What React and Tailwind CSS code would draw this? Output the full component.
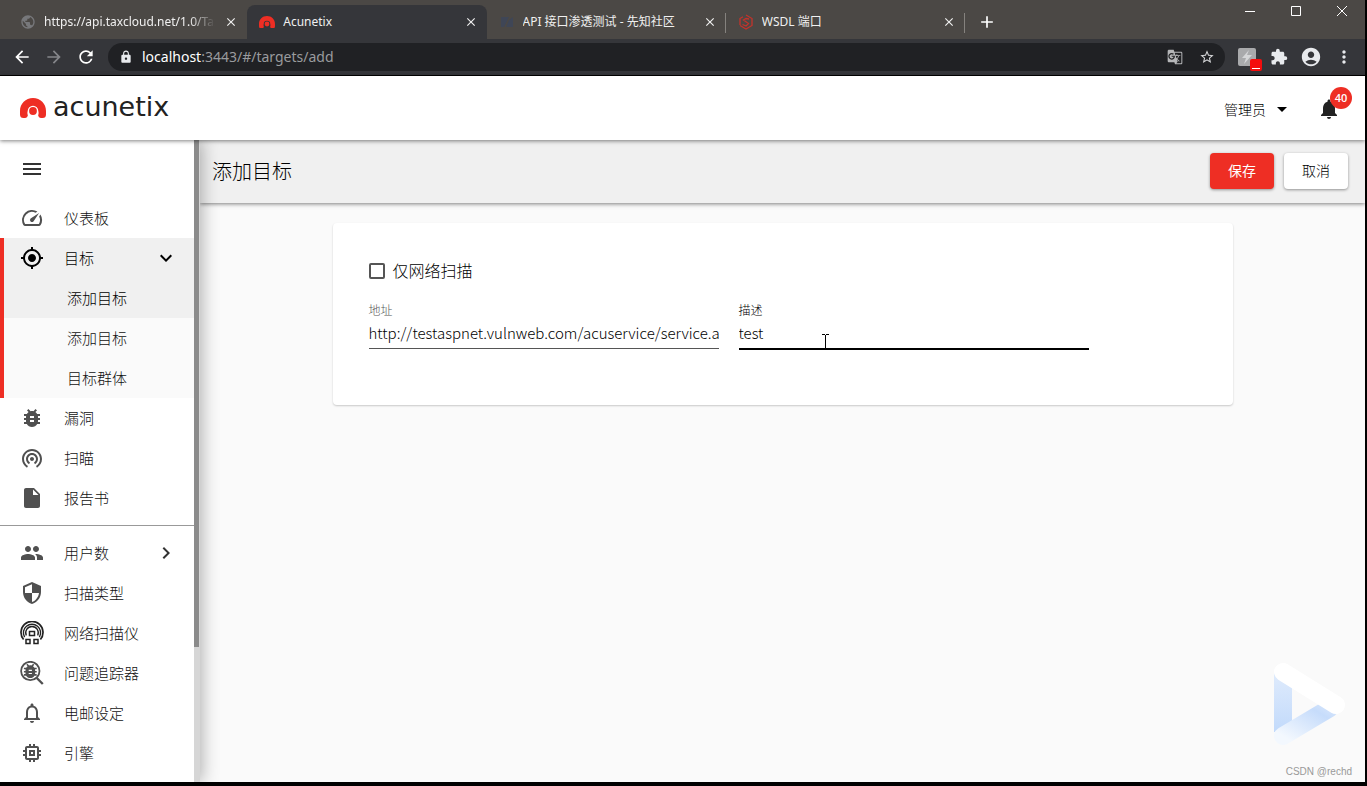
import {
  MdMenu, MdOutlineSpeed, MdGpsFixed, MdExpandMore, MdChevronRight, MdBugReport,
  MdWifiTethering, MdInsertDriveFile, MdPeople, MdSecurity, MdNotificationsNone,
  MdMemory, MdNotifications, MdArrowDropDown, MdArrowBack, MdArrowForward, MdRefresh,
  MdLock, MdStarBorder, MdExtension, MdAccountCircle, MdMoreVert, MdClose, MdAdd, MdPublic,
  MdGTranslate,
} from "react-icons/md";

function AcunetixMark({ className }) {
  return (
    <svg viewBox="0 0 26 20" className={className} aria-hidden="true">
      <path
        fill="#ee2e24"
        d="M13 0C5.600 0 0 5.600 0 13v3.500A3.500 3.500 0 0 0 3.500 20h1A3.200 3.200 0 0 0 7.900 17.300 6.200 6.200 0 0 1 7.700 13a5.300 5.300 0 0 1 10.600 0 6.200 6.200 0 0 1-.2 4.300A3.200 3.200 0 0 0 21.500 20h1a3.500 3.500 0 0 0 3.500-3.500V13C26 5.600 20.400 0 13 0z"
      />
      <circle cx="13" cy="13" r="3.900" fill="#ee2e24" />
    </svg>
  );
}

function NetworkScannerIcon({ className }) {
  return (
    <svg viewBox="0 0 24 24" className={className} fill="none" stroke="#222" aria-hidden="true">
      <path strokeWidth="1.700" d="M3.600 18.500A11 11 0 1 1 20.400 18.500" />
      <path strokeWidth="1.400" d="M4.600 16.200A8.600 8.600 0 1 1 19.400 16.200" />
      <path strokeWidth="1.300" d="M6.300 14.500A6.300 6.300 0 1 1 17.700 14.500" />
      <rect x="9.500" y="10.500" width="5" height="4" strokeWidth="1.500" />
      <rect x="6" y="18.500" width="4" height="4" strokeWidth="1.500" />
      <rect x="14" y="18.500" width="4" height="4" strokeWidth="1.500" />
    </svg>
  );
}

function IssueTrackerIcon({ className }) {
  return (
    <svg viewBox="0 0 24 24" className={className} aria-hidden="true">
      <circle cx="10.300" cy="10" r="9.200" fill="none" stroke="currentColor" strokeWidth="1.800" />
      <path d="M16.800 17l6 6" stroke="currentColor" strokeWidth="2.400" />
      <path
        transform="translate(.7 .3) scale(.8)"
        fill="currentColor"
        d="M20 8h-2.810c-.45-.78-1.070-1.450-1.820-1.960L17 4.410 15.590 3l-2.170 2.170C12.960 5.060 12.490 5 12 5s-.96.060-1.410.170L8.410 3 7 4.410l1.620 1.630C7.880 6.550 7.260 7.220 6.810 8H4v2h2.090c-.05.330-.09.660-.09 1v1H4v2h2v1c0 .340.040.670.090 1H4v2h2.810c1.040 1.790 2.970 3 5.190 3s4.150-1.210 5.190-3H20v-2h-2.090c.05-.330.090-.660.090-1v-1h2v-2h-2v-1c0-.340-.040-.670-.090-1H20V8zm-6 8h-4v-1.500h4V16zm0-4h-4v-1.500h4V12z"
      />
    </svg>
  );
}

function HexIcon({ className }) {
  return (
    <svg viewBox="0 0 16 16" className={className} fill="none" stroke="#c3332b" aria-hidden="true">
      <path d="M8 1l6 3.500v7L8 15l-6-3.500" strokeWidth="1.300" />
      <path d="M2 11V4.500L5 2.700" strokeWidth="1.300" />
      <path d="M11 5L8 4.500 5.500 6l5 3.500L8 12 4.500 10.500" strokeWidth="1.300" />
    </svg>
  );
}

function Tab({ icon, title, active, fade, divider }) {
  return (
    <div
      className={
        "relative flex h-[34px] min-w-0 flex-1 items-center rounded-t-lg pl-3 pr-2 text-[#f0f0f0] " +
        (active ? "bg-[#35363a]" : "")
      }
    >
      <span className="flex size-4 shrink-0 items-center justify-center">{icon}</span>
      <span className={"ml-2 min-w-0 flex-1 overflow-hidden whitespace-nowrap text-xs " + (fade ? "mask-r-from-85% mask-r-to-100%" : "")}>
        {title}
      </span>
      <button type="button" aria-label="关闭标签页" className="ml-2 flex size-4 shrink-0 items-center justify-center">
        <MdClose className="size-[14px]" />
      </button>
      {divider && <span className="absolute right-0 top-2 h-5 w-px bg-[#85827e]" />}
    </div>
  );
}

function Browser() {
  return (
    <div className="shrink-0 bg-[#4b4845] font-['Noto_Sans','Noto_Sans_CJK_SC',sans-serif] font-normal">
      <div className="flex h-[39px] items-end pl-2">
        <div className="flex min-w-0 max-w-[957px] flex-1">
          <Tab fade icon={<MdPublic className="size-4 text-[#77787b]" />} title="https://api.taxcloud.net/1.0/Tax" />
          <Tab active icon={<AcunetixMark className="w-4" />} title="Acunetix" />
          <Tab
            divider
            icon={
              <svg viewBox="0 0 16 16" className="size-4" aria-hidden="true">
                <path fill="#3f4656" d="M2 3h8L5 13H2zM10 6l4-3v10H7z" />
              </svg>
            }
            title="API 接口渗透测试 - 先知社区"
          />
          <Tab divider icon={<HexIcon className="size-4" />} title="WSDL 端口" />
        </div>
        <button type="button" aria-label="新标签页" className="ml-3 flex h-[34px] items-center text-white">
          <MdAdd className="size-5" />
        </button>
        <div className="ml-auto flex items-center self-start pr-[18px] pt-[3px] text-white">
          <button type="button" aria-label="最小化" className="flex h-4 w-[46px] items-center justify-end">
            <svg viewBox="0 0 10 10" className="size-[10px]" stroke="currentColor"><path d="M0 5.500h10" /></svg>
          </button>
          <button type="button" aria-label="最大化" className="flex h-4 w-[46px] items-center justify-end">
            <svg viewBox="0 0 10 10" className="size-[10px]" fill="none" stroke="currentColor"><path d="M.5.500h9v9h-9z" /></svg>
          </button>
          <button type="button" aria-label="关闭" className="flex h-4 w-[46px] items-center justify-end">
            <svg viewBox="0 0 10 10" className="size-[10px]" stroke="currentColor"><path d="M0 0l10 10M10 0L0 10" /></svg>
          </button>
        </div>
      </div>
      <div className="flex h-[37px] items-center border-b border-black bg-[#35363a] pl-3 pr-[11px] text-white">
        <button type="button" aria-label="后退"><MdArrowBack className="size-5" /></button>
        <button type="button" aria-label="前进" className="ml-3 text-[#85868a]"><MdArrowForward className="size-5" /></button>
        <button type="button" aria-label="重新加载" className="ml-3"><MdRefresh className="size-5" /></button>
        <div className="ml-3 flex h-7 min-w-0 flex-1 items-center rounded-full bg-[#202124] pl-[11px] pr-[10px]">
          <MdLock className="mr-[9px] size-[14px] text-[#e8eaed]" />
          <div role="textbox" aria-label="地址栏" className="flex-1 text-sm">
            localhost<span className="text-[#9a9b9e]">:3443/#/targets/add</span>
          </div>
          <MdGTranslate className="size-4 text-[#b5b6b8]" />
          <MdStarBorder className="ml-4 size-4 text-[#d5d6d8]" />
        </div>
        <div className="ml-[13px] flex items-center gap-3">
          <span className="relative flex size-5 items-center">
            <svg viewBox="0 0 18 18" className="size-[18px]"><rect width="18" height="18" rx="2" fill="#a9aaac" /><path d="M11 2L4 10h4l-2 6 8-9H9z" fill="#d5d6d8" /></svg>
            <span className="absolute -bottom-1 -right-1 flex size-3 items-end justify-center rounded-[2px] bg-[#f40d0d] pb-[2px]"><span className="h-px w-2 bg-white" /></span>
          </span>
          <MdExtension className="size-[18px] text-[#e8eaed]" />
          <MdAccountCircle className="size-[22px] text-[#e8eaed]" />
          <MdMoreVert className="size-5 text-[#e8eaed]" />
        </div>
      </div>
    </div>
  );
}

function NavItem({ icon: Icon, label, arrow, active }) {
  return (
    <a
      href="#"
      className={"flex h-10 items-center pr-4 text-[15px] " + (active ? "-ml-1 border-l-4 border-[#ee2e24] bg-[#f0f0f0] text-black" : "text-[#111]")}
    >
      <Icon className={"size-6 shrink-0 " + (active ? "ml-4 text-black" : "ml-5 text-[#505050]")} />
      <span className="ml-5 flex-1">{label}</span>
      {arrow === "down" && <MdExpandMore className="size-6" />}
      {arrow === "right" && <MdChevronRight className="size-6 text-[#333]" />}
    </a>
  );
}

function SubItem({ label, active }) {
  return (
    <a href="#" className={"flex h-10 items-center pl-[63px] text-[15px] " + (active ? "bg-[#f0f0f0] text-black" : "text-[#111]")}>
      {label}
    </a>
  );
}

function Sidebar() {
  return (
    <div className="relative z-20 flex w-[200px] shrink-0 overflow-hidden bg-white shadow-[2px_0_16px_rgba(0,0,0,0.3)]">
      <nav className="min-w-0 flex-1">
        <button type="button" aria-label="菜单" className="ml-5 mt-[17px] mb-[17px] block text-[#333]">
          <MdMenu className="size-6" />
        </button>
        <NavItem icon={MdOutlineSpeed} label="仪表板" />
        <div className="border-l-4 border-[#ee2e24] bg-[#fafafa]">
          <NavItem icon={MdGpsFixed} label="目标" arrow="down" active />
          <SubItem label="添加目标" active />
          <SubItem label="添加目标" />
          <SubItem label="目标群体" />
        </div>
        <NavItem icon={MdBugReport} label="漏洞" />
        <NavItem icon={MdWifiTethering} label="扫瞄" />
        <NavItem icon={MdInsertDriveFile} label="报告书" />
        <hr className="my-[7px] border-[#999]" />
        <NavItem icon={MdPeople} label="用户数" arrow="right" />
        <NavItem icon={MdSecurity} label="扫描类型" />
        <NavItem icon={NetworkScannerIcon} label="网络扫描仪" />
        <NavItem icon={IssueTrackerIcon} label="问题追踪器" />
        <NavItem icon={MdNotificationsNone} label="电邮设定" />
        <NavItem icon={MdMemory} label="引擎" />
      </nav>
      <div className="w-[6px] shrink-0 bg-[#d6d6d6]">
        <div className="h-[79%] w-[5px] bg-[#8b8b8b]" />
      </div>
    </div>
  );
}

function Watermark() {
  return (
    <div className="absolute bottom-0 right-[13px] flex flex-col items-end font-normal" aria-hidden="true">
      <svg viewBox="0 0 76 84" className="mr-[6px] w-[76px]">
        <defs>
          <linearGradient id="wl" x1="0" y1="0" x2="0" y2="1"><stop offset="0" stopColor="#dfebfc" /><stop offset="1" stopColor="#c2dafb" /></linearGradient>
          <linearGradient id="wb" x1="0" y1="1" x2="1" y2="0"><stop offset="0" stopColor="#f3f8fe" /><stop offset=".8" stopColor="#c6dcfb" /><stop offset="1" stopColor="#d4e4fb" /></linearGradient>
        </defs>
        <path d="M4 10h18v60H4z" fill="url(#wl)" />
        <path d="M13 74L60 46" stroke="url(#wb)" strokeWidth="18" strokeLinecap="round" />
        <path d="M13 10L66 43" stroke="#fff" strokeWidth="18" strokeLinecap="round" />
      </svg>
      <span className="mt-5 pb-1 font-['Liberation_Sans',sans-serif] text-[10px] leading-3 text-[#999]">CSDN @rechd</span>
    </div>
  );
}

function TextCursor() {
  return (
    <svg viewBox="0 0 7 16" className="pointer-events-none absolute left-[83px] top-8 h-4 w-[7px]" stroke="#000" aria-hidden="true">
      <path d="M0 .5h3M4 .5h3M3.500 1v14M0 15.500h3M4 15.500h3" />
    </svg>
  );
}

export default function App() {
  return (
    <div className="flex h-screen flex-col overflow-hidden border-b-4 border-r-2 border-black bg-[#fafafa] font-['Noto_Sans_CJK_SC',sans-serif] font-light text-black">
      <Browser />
      <header className="relative z-30 flex h-16 shrink-0 items-center bg-white px-5 shadow-[0_1px_4px_rgba(0,0,0,0.5)]">
        <AcunetixMark className="w-[26px]" />
        <span className="ml-[7px] pb-[2px] font-['DejaVu_Sans',sans-serif] text-[27px] leading-8 font-normal text-[#222]">acunetix</span>
        <button type="button" className="ml-auto flex items-center pt-[2px] text-sm text-black">
          管理员
          <MdArrowDropDown className="ml-1 size-6" />
        </button>
        <button type="button" aria-label="通知" className="relative ml-[23px] mr-1 pt-[2px]">
          <MdNotifications className="size-6 text-[#222]" />
          <span className="absolute -right-[11px] -top-2 flex size-[22px] items-center justify-center rounded-full bg-[#ee2e24] font-['Open_Sans',sans-serif] text-[11px] font-semibold text-white">40</span>
        </button>
      </header>
      <div className="flex min-h-0 flex-1">
        <Sidebar />
        <main className="relative min-w-0 flex-1">
          <div className="flex h-[63px] items-center bg-[#f0f0f0] pb-px pl-3 pr-[17px] shadow-[0_1px_4px_rgba(0,0,0,0.5)]">
            <h1 className="flex-1 text-xl">添加目标</h1>
            <button type="button" className="h-9 w-16 rounded bg-[#ee2e24] pb-[2px] text-sm font-normal text-white shadow-[0_1px_3px_rgba(0,0,0,0.4)]">保存</button>
            <button type="button" className="ml-[10px] h-9 w-16 rounded bg-white pb-[2px] text-sm text-black shadow-[0_1px_3px_rgba(0,0,0,0.4)]">取消</button>
          </div>
          <form className="mx-auto mt-5 w-full max-w-[900px] rounded bg-white px-9 pb-[55px] pt-9 shadow-[0_1px_2px_rgba(0,0,0,0.2)]">
            <div className="flex items-center gap-2">
              <input id="network-only" type="checkbox" className="size-4 appearance-none rounded-[2px] border-2 border-[#555]" />
              <label htmlFor="network-only" className="pb-[2px] text-base leading-[22px]">仅网络扫描</label>
            </div>
            <div className="mt-[19px] flex gap-5">
              <div className="max-w-[350px] flex-1">
                <label htmlFor="address" className="block text-xs leading-4 text-[#555]">地址</label>
                <input id="address" defaultValue="http://testaspnet.vulnweb.com/acuservice/service.asmx" className="block h-[31px] w-full border-b border-[#555] pb-[2px] text-[15px] outline-none" />
              </div>
              <div className="relative max-w-[350px] flex-1">
                <label htmlFor="description" className="block text-xs leading-4">描述</label>
                <input id="description" defaultValue="test" className="block h-8 w-full border-b-2 border-black pb-[2px] text-[15px] outline-none" />
                <TextCursor />
              </div>
            </div>
          </form>
          <Watermark />
        </main>
      </div>
    </div>
  );
}
